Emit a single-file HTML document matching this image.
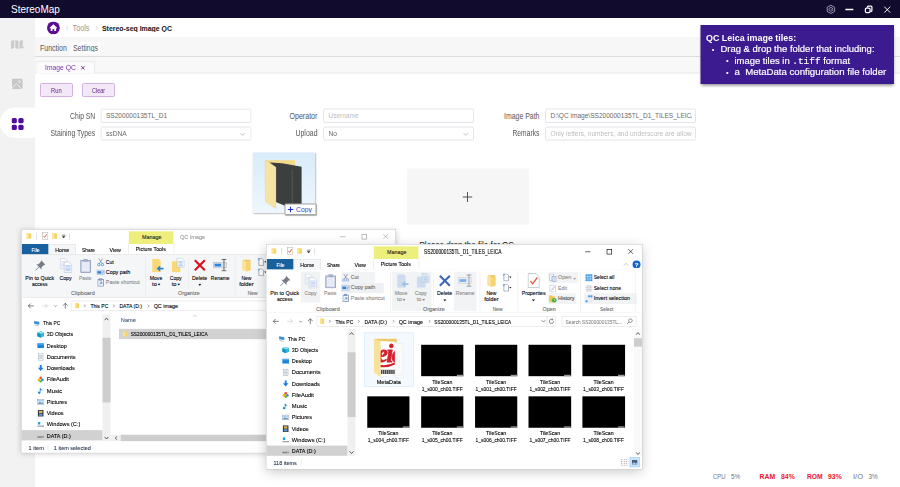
<!DOCTYPE html><html><head><meta charset="utf-8"><title>StereoMap</title><style>
*{box-sizing:border-box;margin:0;padding:0}
html,body{width:900px;height:487px;overflow:hidden;background:#fff}
body{position:relative;font-family:"Liberation Sans",sans-serif;color:#333}
.a{position:absolute}
.t{position:absolute;white-space:nowrap;line-height:1;transform-origin:0 50%}
#app{position:absolute;left:0;top:0;width:1800px;height:974px;transform:scale(.5);transform-origin:0 0;overflow:hidden}

#tb{left:0;top:0;width:1800px;height:36px;background:#110c2e}
#sb{left:0;top:36px;width:70px;height:938px;background:#f2f2f2}
#pill{left:0;top:215px;width:72px;height:61px;background:#fff;border-radius:30.5px 0 0 30.5px}
#crumb{left:70px;top:36px;width:1730px;height:38px;background:#fff}
#menu{left:70px;top:74px;width:1730px;height:40px;background:#f7f7f7;border-bottom:2px solid #dcdcdc}
#tabs{left:70px;top:114px;width:1730px;height:33px;background:#f8f8f8;border-bottom:2px solid #e9e9e9}
#tab{left:71px;top:122px;width:119px;height:25px;background:#fbfbfb;border:2px solid #ebebeb;border-bottom:none;border-radius:4px 4px 0 0}
#content{left:70px;top:160px;width:1730px;height:814px;background:#fff}
.btn{position:absolute;top:166px;height:27.6px;width:66px;background:#f3e8f8;border:2px solid #d2b1e2;border-radius:3px}
.inp{position:absolute;height:28.8px;border:2px solid #e4e4ea;border-radius:4px;background:#fff}
.chev{position:absolute;right:10px;top:8px;width:10.8px;height:10.8px}
#tip{left:1401px;top:50px;width:387px;height:118px;background:#3c1a90;box-shadow:0 3px 6px rgba(0,0,0,.45);color:#fff;font-size:18.4px}
#drag{left:506px;top:304.8px;width:124.4px;height:121.6px;background:linear-gradient(#d9ecfb,#edf6fd);box-shadow:1px 2px 3px rgba(0,0,0,.25);border-radius:2px}
#copy{left:569.4px;top:406.6px;width:63.4px;height:23px;background:#fff;border:2px solid #a6a6a6;box-shadow:1px 1px 2px rgba(0,0,0,.3);border-radius:2px}
#drop{left:814px;top:337.4px;width:244px;height:112px;background:#f6f6f6}

.win{position:absolute;width:800px;height:478px;transform:scale(0.46875);transform-origin:0 0;background:#fff;font-size:12px;color:#000;border:1px solid #8a8a8a;-webkit-text-stroke:0.22px}
.win .x{position:absolute;white-space:nowrap;line-height:1;transform-origin:0 50%}
.win .c{position:absolute;white-space:nowrap;line-height:1;transform:translateX(-50%);transform-origin:50% 50%;text-align:center}
.rib{position:absolute;left:0;top:53px;width:798px;height:92px;background:#f5f6f7;border-top:1px solid #dadbdc;border-bottom:1px solid #dadbdc}
.gl{color:#6d6d6d}
.vs{position:absolute;width:1px;background:#e2e3e4}
.sbv{position:absolute;width:17px;background:#f0f0f0}
.thumb{position:absolute;background:#cdcdcd}
.tile{position:absolute;width:90.4px;height:67.4px;background:#000}
.nav{position:absolute;left:0;top:181px;width:173px;height:271px;background:#fff}
</style></head><body>
<div id="app">
<div class="a" id="tb"></div>
<div class="t" id="t1" style="left:22.4px;top:8.6px;font-size:20.4px;color:#fff;transform:scaleX(0.9784);">StereoMap</div>
<svg class="a" style="left:1644px;top:0px;width:156px;height:36px" viewBox="0 0 78 18"><path d="M8.9 5.2 L12.6 7.3 V11.4 L8.9 13.5 L5.2 11.4 V7.3 Z" fill="none" stroke="#aaa6c2" stroke-width="0.9" stroke-linejoin="round"/><circle cx="8.9" cy="9.35" r="1.9" fill="none" stroke="#aaa6c2" stroke-width="0.8"/><circle cx="9.2" cy="9.35" r="0.55" fill="#aaa6c2"/><path d="M23.4 9.5 H31.3" stroke="#fff" stroke-width="1.5"/><path d="M45.3 7.6 V7 a1 1 0 0 1 1 -1 H48.9 a1 1 0 0 1 1 1 V10.4 a1 1 0 0 1 -1 1 H48.3" fill="none" stroke="#fff" stroke-width="1.25"/><rect x="43.4" y="8" width="4.6" height="4.5" rx="1.1" fill="#110c2e" stroke="#fff" stroke-width="1.25"/><path d="M62.3 6.7 L68.2 12.6 M68.2 6.7 L62.3 12.6" stroke="#fff" stroke-width="0.95"/></svg>
<div class="a" id="sb"></div><div class="a" id="pill"></div>
<svg class="a" style="left:21.8px;top:78.8px;width:28px;height:20px" viewBox="0 0 28 20"><path d="M0 3 L6.5 1 V17 L0 19Z M8.5 1 L15 3 V19 L8.5 17Z M17 3 L23.5 0.5 V16 L17 19Z" fill="#cbcbcb"/><path d="M24 14 L27 17 L24 17.5Z" fill="#cbcbcb"/></svg>
<svg class="a" style="left:24.4px;top:157.4px;width:21.2px;height:21px" viewBox="0 0 21 21"><rect x="0" y="0" width="21" height="21" rx="2.5" fill="#c6c6c6"/><path d="M0 19 L8.5 10.5 L19.5 21" fill="none" stroke="#f4f4f4" stroke-width="1.7"/><circle cx="14.8" cy="6.2" r="2.2" fill="none" stroke="#f4f4f4" stroke-width="1.5"/></svg>
<svg class="a" style="left:23.4px;top:236px;width:24.4px;height:24px" viewBox="0 0 24 24"><rect x="0" y="0" width="10.5" height="10.5" rx="3.2" fill="#520c9a"/><rect x="13.5" y="0" width="10.5" height="10.5" rx="3.2" fill="#520c9a"/><rect x="0" y="13.5" width="10.5" height="10.5" rx="3.2" fill="#520c9a"/><rect x="13.5" y="13.5" width="10.5" height="10.5" rx="3.2" fill="#520c9a"/></svg>
<div class="a" id="crumb"></div>
<svg class="a" style="left:94px;top:43.2px;width:25.6px;height:25.6px" viewBox="0 0 26 26"><circle cx="13" cy="13" r="13" fill="#5a0f92"/><path d="M13 5.5 L5.5 12.5 V13.5 H7.5 V19.5 H11.3 V15 H14.7 V19.5 H18.5 V13.5 H20.5 V12.5 Z" fill="#fff"/></svg>
<svg class="a" style="left:130.6px;top:51px;width:6.8px;height:10px" viewBox="0 0 7 10"><path d="M1.5 1 L5.5 5 L1.5 9" fill="none" stroke="#c2c2c2" stroke-width="1.3"/></svg>
<svg class="a" style="left:190px;top:51px;width:6.8px;height:10px" viewBox="0 0 7 10"><path d="M1.5 1 L5.5 5 L1.5 9" fill="none" stroke="#c2c2c2" stroke-width="1.3"/></svg>
<div class="t" id="t2" style="left:145.2px;top:47px;font-size:16.4px;color:#959595;transform:scaleX(0.8885);">Tools</div>
<div class="t" id="t3" style="left:204px;top:47.2px;font-size:16.2px;color:#111;font-weight:bold;transform:scaleX(0.8550);">Stereo-seq Image QC</div>
<div class="a" id="menu"></div>
<div class="a" style="left:143px;top:84px;width:57px;height:23px;background:#fff;border-radius:3px"></div>
<div class="t" id="t4" style="left:80px;top:87.4px;font-size:16.4px;color:#555;transform:scaleX(0.8525);">Function</div>
<div class="t" id="t5" style="left:146.4px;top:87.4px;font-size:16.4px;color:#555;transform:scaleX(0.8441);">Settings</div>
<div class="a" id="tabs"></div><div class="a" id="tab"></div><div class="a" id="content"></div>
<div class="t" id="t6" style="left:90px;top:127px;font-size:16px;color:#7a2fa6;transform:scaleX(0.8447);">Image QC</div>
<svg class="a" style="left:161.4px;top:130.6px;width:9.2px;height:9.2px" viewBox="0 0 8 8"><path d="M1 1 L7 7 M7 1 L1 7" stroke="#6a2a96" stroke-width="1.6"/></svg>
<div class="btn" style="left:79.6px"></div><div class="btn" style="left:164px"></div>
<div class="t" id="t7" style="left:102.4px;top:173.6px;font-size:13.2px;color:#5b1a86;transform:scaleX(0.8759);">Run</div>
<div class="t" id="t8" style="left:184px;top:173.6px;font-size:13.2px;color:#5b1a86;transform:scaleX(0.8250);">Clear</div>
<div class="t" id="t9" style="left:139.6px;top:223.2px;font-size:17.2px;color:#555;transform:scaleX(0.7875);">Chip SN</div><div class="inp" style="left:201px;top:217.4px;width:302px"></div><div class="a" style="left:203px;top:220.4px;width:292px;height:22px;overflow:hidden"><div class="t" id="t10" style="left:8.8px;top:4.8px;font-size:13.4px;color:#6a6a6a;transform:scaleX(0.9769);">SS200000135TL_D1</div></div>
<div class="t" id="t11" style="left:100.6px;top:258.4px;font-size:17.2px;color:#555;transform:scaleX(0.7951);">Staining Types</div><div class="inp" style="left:201px;top:252.6px;width:302px"><svg class="chev" viewBox="0 0 10 10"><path d="M1 3 L5 7 L9 3" fill="none" stroke="#b4b4b4" stroke-width="1.5"/></svg></div><div class="a" style="left:203px;top:255.6px;width:292px;height:22px;overflow:hidden"><div class="t" id="t12" style="left:8.8px;top:4.8px;font-size:13.4px;color:#6a6a6a;transform:scaleX(0.9983);">ssDNA</div></div>
<div class="t" id="t13" style="left:578.8px;top:223.2px;font-size:17.2px;color:#555;transform:scaleX(0.8227);">Operator</div><div class="inp" style="left:646.4px;top:217.4px;width:302px"></div><div class="a" style="left:648.4px;top:220.4px;width:292px;height:22px;overflow:hidden"><div class="t" id="t14" style="left:8.8px;top:4.8px;font-size:13.4px;color:#bdbdbd;transform:scaleX(0.9712);">Username</div></div>
<div class="t" id="t15" style="left:590.6px;top:258.4px;font-size:17.2px;color:#555;transform:scaleX(0.8078);">Upload</div><div class="inp" style="left:646.4px;top:252.6px;width:302px"><svg class="chev" viewBox="0 0 10 10"><path d="M1 3 L5 7 L9 3" fill="none" stroke="#b4b4b4" stroke-width="1.5"/></svg></div><div class="a" style="left:648.4px;top:255.6px;width:292px;height:22px;overflow:hidden"><div class="t" id="t16" style="left:8.8px;top:4.8px;font-size:13.4px;color:#6a6a6a;transform:scaleX(0.9927);">No</div></div>
<div class="t" id="t17" style="left:1008.4px;top:223.2px;font-size:17.2px;color:#555;transform:scaleX(0.8054);">Image Path</div><div class="inp" style="left:1090px;top:217.4px;width:302px"></div><div class="a" style="left:1092px;top:220.4px;width:292px;height:22px;overflow:hidden"><div class="t" id="t18" style="left:8.8px;top:4.8px;font-size:13.4px;color:#6a6a6a;transform:scaleX(0.9778);">D:\QC image\SS200000135TL_D1_TILES_LEICA</div></div>
<div class="t" id="t19" style="left:1025.4px;top:258.4px;font-size:17.2px;color:#555;transform:scaleX(0.7824);">Remarks</div><div class="inp" style="left:1090px;top:252.6px;width:302px"></div><div class="a" style="left:1092px;top:255.6px;width:292px;height:22px;overflow:hidden"><div class="t" id="t20" style="left:8.8px;top:4.8px;font-size:13.4px;color:#bdbdbd;transform:scaleX(0.9901);">Only letters, numbers, and underscore are allowed</div></div>
<div class="a" id="tip"></div>
<div class="t" id="t21" style="left:1412px;top:66.4px;font-size:19px;color:#fff;font-weight:bold;transform:scaleX(0.9376);">QC Leica image tiles:</div>
<div class="t" style="left:1423.6px;top:90.8px;font-size:15px;color:#fff;">•</div><div class="t" id="t22" style="left:1440.6px;top:88.4px;font-size:19px;color:#fff;transform:scaleX(0.9953);-webkit-text-stroke:0.36px #fff;">Drag &amp; drop the folder that including:</div>
<div class="t" style="left:1452px;top:113.2px;font-size:15px;color:#fff;">•</div><div class="t" id="t23" style="left:1468.6px;top:110.8px;font-size:19px;color:#fff;transform:scaleX(0.9944);-webkit-text-stroke:0.36px #fff;">image tiles in <span style="font-family:'Liberation Mono',monospace">.tiff</span> format</div>
<div class="t" style="left:1452px;top:135.6px;font-size:15px;color:#fff;">•</div><div class="t" id="t24" style="left:1468.6px;top:133.2px;font-size:19px;color:#fff;transform:scaleX(1.0115);-webkit-text-stroke:0.36px #fff;">a&nbsp; MetaData configuration file folder</div>
<div class="a" id="drag"></div>
<svg class="a" style="left:520px;top:312px;width:96px;height:112px" viewBox="260 156 48 56"><path d="M265.5 160.2 H295 V166 H265.5Z" fill="#f3d98a"/><path d="M269.6 162.6 L282 163.3 L301.6 166.8 V204.4 L289.3 207.6 L275.8 202 V167.2Z" fill="#3b3f3d"/><path d="M292.2 169.5 V206.6" stroke="#6d716f" stroke-width="0.5"/><path d="M265 160.4 L275.8 167.2 V208.4 L265.5 201.8Z" fill="#f7e3a3" stroke="#e6cf88" stroke-width="0.4"/></svg>
<div class="a" id="copy"></div>
<svg class="a" style="left:575.2px;top:412.8px;width:12px;height:12px" viewBox="0 0 6 6"><path d="M3 0V6M0 3H6" stroke="#1f2fc2" stroke-width="1.1"/></svg>
<div class="t" id="t25" style="left:592.4px;top:411.2px;font-size:14.8px;color:#3b49b5;transform:scaleX(0.9263);">Copy</div>
<div class="a" id="drop"></div>
<svg class="a" style="left:925.2px;top:384px;width:20px;height:20px" viewBox="0 0 10 10"><path d="M5 0V10M0 5H10" stroke="#444" stroke-width="0.9"/></svg>
<div class="t" id="t26" style="left:838.8px;top:479.8px;font-size:18px;color:#1a1a1a;transform:scaleX(0.8920);">Please drop the file for QC</div>
<div class="t" id="t27" style="left:1425.6px;top:945.2px;font-size:14.2px;color:#777;transform:scaleX(0.8342);">CPU</div>
<div class="t" id="t28" style="left:1462px;top:945.2px;font-size:14.2px;color:#777;transform:scaleX(0.9066);">5%</div>
<div class="t" id="t29" style="left:1519.4px;top:945.2px;font-size:14.2px;color:#f01428;font-weight:bold;transform:scaleX(0.9656);">RAM</div>
<div class="t" id="t30" style="left:1561.6px;top:945.2px;font-size:14.2px;color:#f01428;font-weight:bold;transform:scaleX(0.9716);">84%</div>
<div class="t" id="t31" style="left:1613.6px;top:945.2px;font-size:14.2px;color:#f01428;font-weight:bold;transform:scaleX(0.9423);">ROM</div>
<div class="t" id="t32" style="left:1655.8px;top:945.2px;font-size:14.2px;color:#f01428;font-weight:bold;transform:scaleX(0.9716);">93%</div>
<div class="t" id="t33" style="left:1706px;top:945.2px;font-size:14.2px;color:#777;transform:scaleX(1.0675);">I/O</div>
<div class="t" id="t34" style="left:1736.6px;top:945.2px;font-size:14.2px;color:#777;transform:scaleX(0.9066);">3%</div>
</div>
<div class="win" id="w1" style="left:21.4px;top:229px;width:800px;height:478px;z-index:2;box-shadow:0 2px 12px rgba(0,0,0,.22);border-color:rgba(120,120,120,.5)">
<svg class="a" style="left:10px;top:7px;width:12px;height:14px" viewBox="0 0 12 14"><path d="M1 1 H9 L11 3 V13 H1 Z" fill="#f6d568"/><path d="M1 1 H5 V13 H1 Z" fill="#fbe596"/></svg>
<div class="vs" style="left:31px;top:8px;height:14px;background:#bdbdbd"></div>
<svg class="a" style="left:44px;top:6px;width:13px;height:16px" viewBox="0 0 13 16"><rect x="0.5" y="0.5" width="12" height="15" fill="#fff" stroke="#8d8d8d"/><path d="M3 8 L5.5 11 L10 4" fill="none" stroke="#e0522d" stroke-width="1.8"/></svg>
<svg class="a" style="left:65px;top:7px;width:12px;height:14px" viewBox="0 0 12 14"><path d="M1 1 H9 L11 3 V13 H1 Z" fill="#f6d568"/><path d="M1 1 H5 V13 H1 Z" fill="#fbe596"/></svg>
<svg class="a" style="left:85px;top:10px;width:10px;height:10px" viewBox="0 0 10 10"><path d="M1 2H9" stroke="#222" stroke-width="1.3"/><path d="M1.5 4.5 H8.5 L5 8.5Z" fill="#222"/></svg>
<div class="vs" style="left:102px;top:8px;height:14px;background:#bdbdbd"></div>
<div class="a" style="left:229px;top:3.5px;width:95px;height:27px;background:#eeee7c"></div>
<div class="c" id="t35" style="left:277.5px;top:11.3px;color:#222;transform:translateX(-50%) scaleX(0.9522);">Manage</div>
<div class="x" id="t36" style="left:337.5px;top:8.6px;color:#999;transform:scaleX(0.9226);font-size:13px;">QC image</div>
<svg class="a" style="left:662px;top:0;width:138px;height:30px" viewBox="0 0 138 30"><path d="M18 15.5H29" stroke="#9a9a9a" stroke-width="1.3"/><rect x="64.5" y="10.5" width="10" height="10" fill="none" stroke="#9a9a9a" stroke-width="1.3"/><path d="M110 10 L120 20 M120 10 L110 20" stroke="#9a9a9a" stroke-width="1.3"/></svg>
<div class="a" style="left:1px;top:30.5px;width:57px;height:23px;background:#19609f"></div>
<div class="c" id="t37" style="left:29.5px;top:36.5px;color:#fff;transform:translateX(-50%) scaleX(0.9150);">File</div>
<div class="a" style="left:58px;top:30.5px;width:57.5px;height:23.5px;background:#f5f6f7;border:1px solid #dadbdc;border-bottom:none"></div>
<div class="c" id="t38" style="left:86.5px;top:36.5px;transform:translateX(-50%) scaleX(0.9339);">Home</div>
<div class="c" id="t39" style="left:143px;top:36.5px;transform:translateX(-50%) scaleX(0.8617);">Share</div>
<div class="c" id="t40" style="left:199.5px;top:36.5px;transform:translateX(-50%) scaleX(0.9420);">View</div>
<div class="vs" style="left:228px;top:30px;height:22px;background:#dadbdc"></div>
<div class="vs" style="left:325px;top:30px;height:22px;background:#dadbdc"></div>
<div class="c" id="t41" style="left:276px;top:35.5px;transform:translateX(-50%) scaleX(0.9345);">Picture Tools</div>
<div class="rib" style="width:798px;height:92px;background:#f5f6f7;"></div>
<div class="a" style="left:0;top:0px;width:798px;height:10px">
<svg class="a" style="left:27px;top:64px;width:26px;height:26px" viewBox="0 0 28 28"><path d="M16 2 L26 12 L22 13 L17 18 L17 23 L5 11 L10 11 L15 6 Z" fill="#767c85"/><path d="M11 17 L3 25" stroke="#767c85" stroke-width="2"/></svg>
<div class="c" id="t42" style="left:39px;top:97.3px;color:#000;transform:translateX(-50%) scaleX(0.9489);">Pin to Quick</div><div class="c" id="t43" style="left:39px;top:109.8px;color:#000;transform:translateX(-50%) scaleX(0.8833);">access</div>
<svg class="a" style="left:80.5px;top:61px;width:28px;height:32px;opacity:1" viewBox="0 0 30 34"><path d="M2 1 H12 L17 6 V24 H2 Z" fill="#fff" stroke="#aab4c4"/><path d="M4.5 8H14.5M4.5 11H14.5M4.5 14H14.5M4.5 17H14.5M4.5 20H14.5" stroke="#c5d8f6" stroke-width="1.7"/><path d="M11 9 H22 L28 15 V33 H11 Z" fill="#fdfdfe" stroke="#a3afc2"/><path d="M13.5 17H25.5M13.5 20H25.5M13.5 23H25.5M13.5 26H25.5M13.5 29H25.5" stroke="#a9c6f5" stroke-width="1.9"/></svg>
<div class="c" id="t44" style="left:94px;top:97.3px;color:#000;transform:translateX(-50%) scaleX(0.9138);">Copy</div>
<svg class="a" style="left:125px;top:62px;width:24px;height:31px" viewBox="0 0 26 34"><rect x="1.5" y="4.5" width="23" height="28" fill="#c9d1e6" stroke="#7f8fb5" stroke-width="1.6"/><rect x="4.5" y="8.5" width="17" height="21" fill="#eceef8"/><path d="M7 13H19M7 17H19M7 21H19M7 25H19" stroke="#dcdff0" stroke-width="1"/><rect x="9" y="1.5" width="8" height="5" fill="#aeb9cc" stroke="#7f8fb5"/></svg>
<div class="c" id="t45" style="left:136px;top:97.3px;color:#8b8b8b;transform:translateX(-50%) scaleX(0.8538);">Paste</div>
<svg class="a" style="left:161px;top:61px;width:16px;height:18px" viewBox="0 0 16 18"><path d="M4 1 L11 12 M12 1 L5 12" stroke="#7a8594" stroke-width="1.5"/><circle cx="4" cy="14" r="2.6" fill="none" stroke="#2b8de0" stroke-width="1.6"/><circle cx="12" cy="14" r="2.6" fill="none" stroke="#2b8de0" stroke-width="1.6"/></svg>
<div class="x" id="t46" style="left:180px;top:62.5px;color:#000;transform:scaleX(0.8990);">Cut</div>
<svg class="a" style="left:160px;top:85px;width:18px;height:13px" viewBox="0 0 18 13"><rect x="0.5" y="1.5" width="17" height="10" fill="#cfe0f6" stroke="#9db5d6"/><rect x="2" y="4" width="8" height="5" fill="#2f7fd6"/><path d="M12 9 L15 4" stroke="#5f6f86" stroke-width="1.2"/></svg>
<div class="x" id="t47" style="left:180px;top:85.2px;color:#000;transform:scaleX(0.9469);">Copy path</div>
<svg class="a" style="left:162px;top:104px;width:14px;height:18px" viewBox="0 0 14 18"><rect x="1" y="3" width="12" height="14" fill="#eef2f9" stroke="#5e79ad" stroke-width="1.4"/><rect x="4.5" y="0.8" width="5" height="3.4" fill="#9fb0cc" stroke="#5e79ad"/><path d="M5 13 L9 9 M6 8.6 H9.4 V12" fill="none" stroke="#2a62c4" stroke-width="1.3"/></svg>
<div class="x" id="t48" style="left:180px;top:107px;color:#8b8b8b;transform:scaleX(0.9424);">Paste shortcut</div>
<div class="c" id="t49" style="left:131px;top:129.8px;color:#6d6d6d;transform:translateX(-50%) scaleX(0.9849);">Clipboard</div>
<div class="vs" style="left:264px;top:58px;height:84px"></div>
<svg class="a" style="left:277px;top:62px;width:30px;height:30px;opacity:1" viewBox="0 0 30 30"><path d="M2 1 H16 L20 5 V29 H2 Z" fill="#f8d877"/><path d="M26 19.5 H19 V15 L11 21.5 L19 28 V23.5 H26 Z" fill="#2a86e0"/></svg>
<div class="c" id="t50" style="left:287px;top:97.3px;color:#000;transform:translateX(-50%) scaleX(0.9201);">Move</div><div class="c" style="left:287px;top:109.8px;color:#000;">to&nbsp;&nbsp;</div>
<svg class="a" style="left:320px;top:60px;width:30px;height:32px;opacity:1" viewBox="0 0 30 32"><path d="M1 8 H15 L19 12 V31 H1 Z" fill="#f8d877"/><path d="M12 1 H22 L27 6 V20 H12 Z" fill="#fdfdfe" stroke="#9fb2cc"/><path d="M15 8H24M15 11H24M15 14H24M15 17H24" stroke="#8fb4ea" stroke-width="1.4"/></svg>
<div class="c" id="t51" style="left:329px;top:97.3px;color:#000;transform:translateX(-50%) scaleX(0.9138);">Copy</div><div class="c" style="left:329px;top:109.8px;color:#000;">to&nbsp;&nbsp;</div>
<svg class="a" style="left:290px;top:115px;width:7px;height:5px" viewBox="0 0 7 5"><path d="M0 0 H7 L3.5 4.5Z" fill="#000"/></svg>
<svg class="a" style="left:332px;top:115px;width:7px;height:5px" viewBox="0 0 7 5"><path d="M0 0 H7 L3.5 4.5Z" fill="#000"/></svg>
<div class="vs" style="left:356px;top:60px;height:62px"></div>
<svg class="a" style="left:366.5px;top:63px;width:27px;height:27px" viewBox="0 0 24 24"><path d="M2.5 2.5 L21.5 21.5 M21.5 2.5 L2.5 21.5" stroke="#d8101c" stroke-width="4"/></svg>
<div class="c" id="t52" style="left:380px;top:97.3px;color:#000;transform:translateX(-50%) scaleX(0.9456);">Delete</div>
<svg class="a" style="left:376.5px;top:116px;width:7px;height:5px" viewBox="0 0 7 5"><path d="M0 0 H7 L3.5 4.5Z" fill="#222"/></svg>
<svg class="a" style="left:408px;top:62px;width:34px;height:28px;opacity:1" viewBox="0 0 34 28"><rect x="1" y="8" width="28" height="12" fill="#e4e8ee" stroke="#a3acb8"/><rect x="4" y="11" width="14" height="6" fill="#2a86e0"/><path d="M19 2 H29 M24 2 V26 M19 26 H29" stroke="#3c3c3c" stroke-width="1.6" fill="none"/></svg>
<div class="c" id="t53" style="left:424px;top:97.3px;color:#000;transform:translateX(-50%) scaleX(0.8796);">Rename</div>
<div class="c" id="t54" style="left:357px;top:129.8px;color:#6d6d6d;transform:translateX(-50%) scaleX(0.9466);">Organize</div>
<div class="vs" style="left:455px;top:58px;height:84px"></div>
<svg class="a" style="left:469.5px;top:61px;width:20px;height:32px" viewBox="0 0 24 32"><path d="M3 1 H22 V28 H3 Z" fill="#eec55a"/><path d="M1 2 L12 5 V31 L1 27 Z" fill="#fbe39a"/><path d="M12 5 H22 V28 L12 31Z" fill="#f6d56e"/></svg>
<div class="c" id="t55" style="left:480px;top:97.3px;color:#000;transform:translateX(-50%) scaleX(0.8869);">New</div><div class="c" id="t56" style="left:480px;top:109.8px;color:#000;transform:translateX(-50%) scaleX(1.0223);">folder</div>
<svg class="a" style="left:503px;top:61px;width:20px;height:16.5px" viewBox="0 0 24 20"><path d="M4 1 H12 L16 5 V19 H4 Z" fill="#fdfdfe" stroke="#5d6b7c" stroke-width="1.3"/><path d="M1 3 L7 3 M4 0 L4 6" stroke="#4a90d9" stroke-width="1.4"/><path d="M18 8 H24 L21 12Z" fill="#222"/></svg>
<svg class="a" style="left:503px;top:83px;width:20px;height:16.5px" viewBox="0 0 24 20"><path d="M4 1 H12 L16 5 V19 H4 Z" fill="#fdfdfe" stroke="#5d6b7c" stroke-width="1.3"/><path d="M1 3 L7 3 M4 0 L4 6" stroke="#4a90d9" stroke-width="1.4"/><path d="M18 8 H24 L21 12Z" fill="#222"/></svg>
<div class="c" id="t57" style="left:493px;top:129.8px;color:#6d6d6d;transform:translateX(-50%) scaleX(0.8744);">New</div>
<div class="vs" style="left:536px;top:58px;height:84px"></div>
<svg class="a" style="left:557px;top:60px;width:26px;height:32px" viewBox="0 0 26 32"><path d="M1 1 H18 L25 8 V31 H1 Z" fill="#fdfdfe" stroke="#9aa3ad" stroke-width="1.2"/><path d="M6 17 L11 23 L21 9" fill="none" stroke="#e0522d" stroke-width="2.6"/></svg>
<div class="c" id="t58" style="left:569.5px;top:97.3px;color:#000;transform:translateX(-50%) scaleX(0.9360);">Properties</div>
<svg class="a" style="left:566px;top:116px;width:7px;height:5px" viewBox="0 0 7 5"><path d="M0 0 H7 L3.5 4.5Z" fill="#222"/></svg>
<svg class="a" style="left:603px;top:61px;width:16px;height:18px" viewBox="0 0 16 18"><rect x="1" y="1" width="9" height="14" fill="#f4f6fa" stroke="#9aa6b8"/><rect x="6" y="6" width="9" height="11" fill="#cfdcf2" stroke="#7f95bd"/></svg>
<div class="x" id="t59" style="left:622px;top:63.2px;color:#8b8b8b;transform:scaleX(0.9605);">Open</div>
<svg class="a" style="left:654px;top:70px;width:7px;height:5px" viewBox="0 0 7 5"><path d="M0 0 H7 L3.5 4.5Z" fill="#9a9a9a"/></svg>
<svg class="a" style="left:603px;top:84px;width:16px;height:18px" viewBox="0 0 16 18"><rect x="1.5" y="1.5" width="12" height="15" fill="#f7f8fa" stroke="#b3bac6"/><path d="M5 13 L12 5" stroke="#a9b6cc" stroke-width="2"/></svg>
<div class="x" id="t60" style="left:622px;top:85.6px;color:#8b8b8b;transform:scaleX(0.9184);">Edit</div>
<svg class="a" style="left:602px;top:105px;width:18px;height:19px" viewBox="0 0 18 19"><path d="M1 3 H7 L9 5 H14 V17 H1 Z" fill="#f2c84b"/><circle cx="12" cy="13" r="5" fill="#3fae49"/><path d="M12 10 V13 H14.5" stroke="#fff" stroke-width="1.3" fill="none"/></svg>
<div class="x" id="t61" style="left:622px;top:106.8px;color:#000;transform:scaleX(0.9265);">History</div>
<div class="c" id="t62" style="left:603px;top:129.8px;color:#6d6d6d;transform:translateX(-50%) scaleX(0.9707);">Open</div>
<div class="vs" style="left:670px;top:58px;height:84px"></div>
<svg class="a" style="left:680px;top:62px;width:16px;height:16px" viewBox="0 0 16 16"><rect x="0.5" y="0.5" width="15" height="15" fill="#3a96e8"/><path d="M0 5.5H16M0 10.5H16M5.5 0V16M10.5 0V16" stroke="#d4ebff" stroke-width="1.2"/></svg>
<div class="x" id="t63" style="left:698px;top:63.2px;transform:scaleX(0.9075);">Select all</div>
<svg class="a" style="left:680px;top:85px;width:16px;height:16px" viewBox="0 0 16 16"><rect x="0.5" y="0.5" width="15" height="15" fill="#eceef1"/><path d="M0 5.5H16M0 10.5H16M5.5 0V16M10.5 0V16" stroke="#c4c9d1" stroke-width="1.2"/></svg>
<div class="x" id="t64" style="left:698px;top:85.6px;transform:scaleX(0.9228);">Select none</div>
<svg class="a" style="left:680px;top:107px;width:16px;height:16px" viewBox="0 0 16 16"><rect x="0.5" y="0.5" width="15" height="15" fill="#e6eaf0"/><rect x="6" y="0.5" width="9.5" height="5" fill="#3a96e8"/><rect x="0.5" y="10.5" width="5" height="5" fill="#3a96e8"/><path d="M0 5.5H16M0 10.5H16M5.5 0V16M10.5 0V16" stroke="#f2f6fb" stroke-width="1.2"/></svg>
<div class="x" id="t65" style="left:698px;top:106.8px;transform:scaleX(0.9589);">Invert selection</div>
<div class="c" id="t66" style="left:726px;top:129.8px;color:#6d6d6d;transform:translateX(-50%) scaleX(0.8543);">Select</div>
<div class="vs" style="left:786px;top:58px;height:84px"></div>
<svg class="a" style="left:8px;top:152px;width:100px;height:22px" viewBox="0 0 100 22"><path d="M18 11 H6.5 M11.5 6 L6.5 11 L11.5 16" fill="none" stroke="#3f3f3f" stroke-width="1.4"/><path d="M36 11 H47.5 M42.5 6 L47.5 11 L42.5 16" fill="none" stroke="#cdcdcd" stroke-width="1.4"/><path d="M62 10 L64.7 12.7 L67.4 10" fill="none" stroke="#666" stroke-width="1.4"/><path d="M85.5 17 V5.5 M80.5 10.5 L85.5 5.5 L90.5 10.5" fill="none" stroke="#3f3f3f" stroke-width="1.4"/></svg>
<div class="a" style="left:107px;top:152px;width:492px;height:22px;border:1px solid #d9d9d9;background:#fff"></div>
<svg class="a" style="left:113px;top:156px;width:11px;height:13px" viewBox="0 0 12 14"><path d="M1 1 H9 L11 3 V13 H1 Z" fill="#f6d568"/><path d="M1 1 H5 V13 H1 Z" fill="#fbe596"/></svg>
<svg class="a" style="left:132px;top:159px;width:6px;height:8px" viewBox="0 0 6 8"><path d="M1.5 1 L4.5 4 L1.5 7" fill="none" stroke="#555" stroke-width="1.2"/></svg>
<div class="x" id="t67" style="left:146.8px;top:157.5px;transform:scaleX(0.8949);">This PC</div>
<svg class="a" style="left:194px;top:159px;width:6px;height:8px" viewBox="0 0 6 8"><path d="M1.5 1 L4.5 4 L1.5 7" fill="none" stroke="#555" stroke-width="1.2"/></svg>
<div class="x" id="t68" style="left:208.6px;top:157.5px;transform:scaleX(0.9075);">DATA (D:)</div>
<svg class="a" style="left:268px;top:159px;width:6px;height:8px" viewBox="0 0 6 8"><path d="M1.5 1 L4.5 4 L1.5 7" fill="none" stroke="#555" stroke-width="1.2"/></svg>
<div class="x" id="t69" style="left:282.2px;top:157.5px;transform:scaleX(0.9587);">QC image</div>
</div>
<div class="a" style="left:0;top:0px;width:798px;height:476px">
<div class="a" style="left:0;top:427.7px;width:173px;height:22.5px;background:#d1d1d1"></div>
<svg class="a" style="left:25px;top:191.7px;width:16px;height:16px" viewBox="0 0 16 16"><path d="M2 3 L13 5 V11 L2 9 Z" fill="#3b8fd4"/><path d="M3 12 L12 13.5" stroke="#9aa7b3" stroke-width="1.5"/></svg>
<div class="x" id="t70" style="left:46.3px;top:193.7px;transform:scaleX(0.8644);">This PC</div>
<svg class="a" style="left:33px;top:215.7px;width:16px;height:16px" viewBox="0 0 16 16"><path d="M8 1 L15 4 V12 L8 15 L1 12 V4 Z" fill="#33b7dc"/><path d="M8 1 L15 4 L8 7 L1 4 Z" fill="#8fe0f2"/><path d="M8 7 V15 L1 12 V4 Z" fill="#1590c2"/></svg>
<div class="x" id="t71" style="left:54px;top:217.7px;transform:scaleX(0.9485);">3D Objects</div>
<svg class="a" style="left:33px;top:239.7px;width:16px;height:16px" viewBox="0 0 16 16"><rect x="1" y="3" width="14" height="10" fill="#1a83e0"/><rect x="1" y="3" width="14" height="3" fill="#56a8ef"/></svg>
<div class="x" id="t72" style="left:54px;top:241.7px;transform:scaleX(0.9698);">Desktop</div>
<svg class="a" style="left:33px;top:263.7px;width:16px;height:16px" viewBox="0 0 16 16"><rect x="3" y="1" width="10" height="14" fill="#f4f4f4" stroke="#9aa4b0" stroke-width="1"/><path d="M5 5H11M5 8H11M5 11H11" stroke="#7f9cc0" stroke-width="1"/></svg>
<div class="x" id="t73" style="left:54px;top:265.7px;transform:scaleX(1.0131);">Documents</div>
<svg class="a" style="left:33px;top:287.7px;width:16px;height:16px" viewBox="0 0 16 16"><path d="M6 1 H10 V7 H14 L8 14 L2 7 H6 Z" fill="#1b7fe0"/></svg>
<div class="x" id="t74" style="left:54px;top:289.7px;transform:scaleX(1.0105);">Downloads</div>
<svg class="a" style="left:33px;top:311.7px;width:16px;height:16px" viewBox="0 0 16 16"><circle cx="8" cy="4.5" r="3" fill="#f2542d"/><circle cx="4.5" cy="9" r="3" fill="#f7b500"/><circle cx="11.5" cy="9" r="3" fill="#3a8ee6"/><circle cx="8" cy="12" r="2.6" fill="#66b32e"/></svg>
<div class="x" id="t75" style="left:54px;top:313.7px;transform:scaleX(1.0131);">FileAudit</div>
<svg class="a" style="left:33px;top:335.7px;width:16px;height:16px" viewBox="0 0 16 16"><path d="M6 2 L7.5 2 C8 5 12 5 12 9 C11 7 9 7 7.5 7 V12 A2.8 2.5 0 1 1 6 10 Z" fill="#1c86e8"/></svg>
<div class="x" id="t76" style="left:54px;top:337.7px;transform:scaleX(1.0401);">Music</div>
<svg class="a" style="left:33px;top:359.7px;width:16px;height:16px" viewBox="0 0 16 16"><rect x="1" y="3" width="14" height="10" fill="#eef2f6" stroke="#8c98a6" stroke-width="1"/><path d="M2 12 L6 7 L9 10 L11 8 L14 12 Z" fill="#5e8cc0"/><rect x="2" y="4" width="12" height="3" fill="#9fd0f5"/></svg>
<div class="x" id="t77" style="left:54px;top:361.7px;transform:scaleX(0.9940);">Pictures</div>
<svg class="a" style="left:33px;top:383.7px;width:16px;height:16px" viewBox="0 0 16 16"><rect x="2" y="1" width="12" height="14" fill="#3a3f4a"/><rect x="4.5" y="3" width="7" height="4.5" fill="#e7b64a"/><rect x="4.5" y="9" width="7" height="4.5" fill="#5c9bd6"/></svg>
<div class="x" id="t78" style="left:54px;top:385.7px;transform:scaleX(0.9812);">Videos</div>
<svg class="a" style="left:33px;top:407.7px;width:16px;height:16px" viewBox="0 0 16 16"><path d="M1 10 H15 V13 H1 Z" fill="#9aa3ad"/><path d="M2 3 L7 2.3 V8 H2 Z" fill="#1fa0e6"/><rect x="11" y="11" width="3" height="1" fill="#42d94c"/></svg>
<div class="x" id="t79" style="left:54px;top:409.7px;transform:scaleX(0.9928);">Windows (C:)</div>
<svg class="a" style="left:33px;top:431.7px;width:16px;height:16px" viewBox="0 0 16 16"><path d="M1 9 H15 V12.5 H1 Z" fill="#7d868f"/><rect x="11" y="10.5" width="3" height="1" fill="#dfe5ea"/></svg>
<div class="x" id="t80" style="left:54px;top:433.7px;transform:scaleX(0.9643);">DATA (D:)</div>
<div class="sbv" style="left:173px;top:181px;height:271px"></div>
<div class="thumb" style="left:173px;top:231px;width:17px;height:138px"></div>
<svg class="a" style="left:176px;top:187px;width:11px;height:8px" viewBox="0 0 11 8"><path d="M1.5 6.5 L5.5 2 L9.5 6.5" fill="none" stroke="#505050" stroke-width="2"/></svg>
<svg class="a" style="left:176px;top:441px;width:11px;height:8px" viewBox="0 0 11 8"><path d="M1.5 1.5 L5.5 6 L9.5 1.5" fill="none" stroke="#505050" stroke-width="2"/></svg>
<div class="x" style="left:212px;top:188px;color:#4c607a;">Name</div>
<svg class="a" style="left:365px;top:181px;width:9px;height:6px" viewBox="0 0 9 6"><path d="M1 5 L4.5 1.5 L8 5" fill="none" stroke="#9a9a9a" stroke-width="1.1"/></svg>
<div class="a" style="left:208px;top:212px;width:590px;height:22px;background:#d2d2d2"></div>
<svg class="a" style="left:216px;top:216px;width:11px;height:14px" viewBox="0 0 12 14"><path d="M1 1 H9 L11 3 V13 H1 Z" fill="#f6d568"/><path d="M1 1 H5 V13 H1 Z" fill="#fbe596"/></svg>
<div class="x" id="t81" style="left:233px;top:217.5px;transform:scaleX(0.8492);">SS200000135TL_D1_TILES_LEICA</div>
<div class="a" style="left:190px;top:438px;width:608px;height:14px;background:#f0f0f0"></div>
<div class="thumb" style="left:212px;top:438px;width:586px;height:14px"></div>
<svg class="a" style="left:198px;top:440px;width:8px;height:10px" viewBox="0 0 8 10"><path d="M6 1.5 L2 5 L6 8.5" fill="none" stroke="#505050" stroke-width="1.8"/></svg>
<div class="a" style="left:0;top:452px;width:798px;height:24px;background:#fff"></div>
<div class="x" id="t82" style="left:15px;top:459.5px;color:#2a3950;transform:scaleX(1.0065);">1 item</div><div class="vs" style="left:56px;top:457px;height:16px"></div><div class="x" id="t83" style="left:69px;top:459.5px;color:#2a3950;transform:scaleX(0.9775);">1 item selected</div>
</div></div>
<div class="win" id="w2" style="left:265.8px;top:244.1px;width:803px;height:480.5px;z-index:3;box-shadow:0 6px 24px rgba(0,0,0,.21);border-color:rgba(110,110,110,.45)">
<svg class="a" style="left:10px;top:7px;width:12px;height:14px" viewBox="0 0 12 14"><path d="M1 1 H9 L11 3 V13 H1 Z" fill="#f6d568"/><path d="M1 1 H5 V13 H1 Z" fill="#fbe596"/></svg>
<div class="vs" style="left:31px;top:8px;height:14px;background:#bdbdbd"></div>
<svg class="a" style="left:44px;top:6px;width:13px;height:16px" viewBox="0 0 13 16"><rect x="0.5" y="0.5" width="12" height="15" fill="#fff" stroke="#8d8d8d"/><path d="M3 8 L5.5 11 L10 4" fill="none" stroke="#e0522d" stroke-width="1.8"/></svg>
<svg class="a" style="left:65px;top:7px;width:12px;height:14px" viewBox="0 0 12 14"><path d="M1 1 H9 L11 3 V13 H1 Z" fill="#f6d568"/><path d="M1 1 H5 V13 H1 Z" fill="#fbe596"/></svg>
<svg class="a" style="left:85px;top:10px;width:10px;height:10px" viewBox="0 0 10 10"><path d="M1 2H9" stroke="#222" stroke-width="1.3"/><path d="M1.5 4.5 H8.5 L5 8.5Z" fill="#222"/></svg>
<div class="vs" style="left:102px;top:8px;height:14px;background:#bdbdbd"></div>
<div class="a" style="left:229px;top:3.5px;width:95px;height:27px;background:#eeee7c"></div>
<div class="c" id="t84" style="left:277.5px;top:11.3px;color:#222;transform:translateX(-50%) scaleX(0.9522);">Manage</div>
<div class="x" id="t85" style="left:336px;top:8.5px;color:#000;transform:scaleX(0.7323);font-size:14px;">SS200000135TL_D1_TILES_LEICA</div>
<svg class="a" style="left:662px;top:0;width:138px;height:30px" viewBox="0 0 138 30"><path d="M18 15.5H29" stroke="#000" stroke-width="1.3"/><rect x="64.5" y="10.5" width="10" height="10" fill="none" stroke="#000" stroke-width="1.3"/><path d="M110 10 L120 20 M120 10 L110 20" stroke="#000" stroke-width="1.3"/></svg>
<div class="a" style="left:1px;top:30.5px;width:57px;height:23px;background:#19609f"></div>
<div class="c" id="t86" style="left:29.5px;top:36.5px;color:#fff;transform:translateX(-50%) scaleX(0.9150);">File</div>
<div class="a" style="left:58px;top:30.5px;width:57.5px;height:23.5px;background:#f5f6f7;border:1px solid #dadbdc;border-bottom:none"></div>
<div class="c" id="t87" style="left:86.5px;top:36.5px;transform:translateX(-50%) scaleX(0.9339);">Home</div>
<div class="c" id="t88" style="left:143px;top:36.5px;transform:translateX(-50%) scaleX(0.8617);">Share</div>
<div class="c" id="t89" style="left:199.5px;top:36.5px;transform:translateX(-50%) scaleX(0.9420);">View</div>
<div class="vs" style="left:228px;top:30px;height:22px;background:#dadbdc"></div>
<div class="vs" style="left:325px;top:30px;height:22px;background:#dadbdc"></div>
<div class="c" id="t90" style="left:276px;top:35.5px;transform:translateX(-50%) scaleX(0.9345);">Picture Tools</div>
<svg class="a" style="left:760px;top:37px;width:14px;height:10px" viewBox="0 0 14 10"><path d="M2 8 L7 3 L12 8" fill="none" stroke="#b5b5b5" stroke-width="1.4"/></svg>
<div class="a" style="left:781px;top:34px;width:17px;height:17px;border-radius:50%;background:#1565c8"></div>
<div class="c" style="left:789.5px;top:36px;color:#fff;font-weight:bold;font-size:13px;">?</div>
<div class="rib" style="width:801px;height:93.1px;background:#fff;border-bottom-color:#f0f0f0;border-top-color:#f3f3f3"></div>
<div class="a" style="left:0;top:1.1px;width:801px;height:10px">
<svg class="a" style="left:27px;top:64px;width:26px;height:26px" viewBox="0 0 28 28"><path d="M16 2 L26 12 L22 13 L17 18 L17 23 L5 11 L10 11 L15 6 Z" fill="#767c85"/><path d="M11 17 L3 25" stroke="#767c85" stroke-width="2"/></svg>
<div class="c" id="t91" style="left:39px;top:97.3px;color:#000;transform:translateX(-50%) scaleX(0.9489);">Pin to Quick</div><div class="c" id="t92" style="left:39px;top:109.8px;color:#000;transform:translateX(-50%) scaleX(0.8833);">access</div>
<div class="a" style="left:73px;top:57px;width:42px;height:66px;background:#f1f3f5"></div>
<svg class="a" style="left:80.5px;top:61px;width:28px;height:32px;opacity:.8" viewBox="0 0 30 34"><path d="M2 1 H12 L17 6 V24 H2 Z" fill="#fff" stroke="#aab4c4"/><path d="M4.5 8H14.5M4.5 11H14.5M4.5 14H14.5M4.5 17H14.5M4.5 20H14.5" stroke="#c5d8f6" stroke-width="1.7"/><path d="M11 9 H22 L28 15 V33 H11 Z" fill="#fdfdfe" stroke="#a3afc2"/><path d="M13.5 17H25.5M13.5 20H25.5M13.5 23H25.5M13.5 26H25.5M13.5 29H25.5" stroke="#a9c6f5" stroke-width="1.9"/></svg>
<div class="c" id="t93" style="left:94px;top:97.3px;color:#8b8b8b;transform:translateX(-50%) scaleX(0.9138);">Copy</div>
<svg class="a" style="left:125px;top:62px;width:24px;height:31px" viewBox="0 0 26 34"><rect x="1.5" y="4.5" width="23" height="28" fill="#c9d1e6" stroke="#7f8fb5" stroke-width="1.6"/><rect x="4.5" y="8.5" width="17" height="21" fill="#eceef8"/><path d="M7 13H19M7 17H19M7 21H19M7 25H19" stroke="#dcdff0" stroke-width="1"/><rect x="9" y="1.5" width="8" height="5" fill="#aeb9cc" stroke="#7f8fb5"/></svg>
<div class="c" id="t94" style="left:136px;top:97.3px;color:#8b8b8b;transform:translateX(-50%) scaleX(0.8538);">Paste</div>
<div class="a" style="left:160px;top:58px;width:72px;height:23px;background:#f1f3f5"></div><div class="a" style="left:160px;top:81px;width:90px;height:22px;background:#eef0f3"></div>
<svg class="a" style="left:161px;top:61px;width:16px;height:18px" viewBox="0 0 16 18"><path d="M4 1 L11 12 M12 1 L5 12" stroke="#7a8594" stroke-width="1.5"/><circle cx="4" cy="14" r="2.6" fill="none" stroke="#7f9fd0" stroke-width="1.6"/><circle cx="12" cy="14" r="2.6" fill="none" stroke="#7f9fd0" stroke-width="1.6"/></svg>
<div class="x" id="t95" style="left:180px;top:62.5px;color:#6c6c6c;transform:scaleX(0.8990);">Cut</div>
<svg class="a" style="left:160px;top:85px;width:18px;height:13px" viewBox="0 0 18 13"><rect x="0.5" y="1.5" width="17" height="10" fill="#cfe0f6" stroke="#9db5d6"/><rect x="2" y="4" width="8" height="5" fill="#2f7fd6"/><path d="M12 9 L15 4" stroke="#5f6f86" stroke-width="1.2"/></svg>
<div class="x" id="t96" style="left:180px;top:85.2px;color:#6c6c6c;transform:scaleX(0.9469);">Copy path</div>
<svg class="a" style="left:162px;top:104px;width:14px;height:18px" viewBox="0 0 14 18"><rect x="1" y="3" width="12" height="14" fill="#eef2f9" stroke="#5e79ad" stroke-width="1.4"/><rect x="4.5" y="0.8" width="5" height="3.4" fill="#9fb0cc" stroke="#5e79ad"/><path d="M5 13 L9 9 M6 8.6 H9.4 V12" fill="none" stroke="#2a62c4" stroke-width="1.3"/></svg>
<div class="x" id="t97" style="left:180px;top:107px;color:#8b8b8b;transform:scaleX(0.9424);">Paste shortcut</div>
<div class="c" id="t98" style="left:131px;top:129.8px;color:#6d6d6d;transform:translateX(-50%) scaleX(0.9849);">Clipboard</div>
<div class="vs" style="left:264px;top:58px;height:84px"></div>
<div class="a" style="left:268px;top:57px;width:84px;height:84px;background:#f1f3f5"></div>
<svg class="a" style="left:277px;top:62px;width:30px;height:30px;opacity:.8" viewBox="0 0 30 30"><path d="M2 1 H16 L20 5 V29 H2 Z" fill="#c3d6ee"/><path d="M26 19.5 H19 V15 L11 21.5 L19 28 V23.5 H26 Z" fill="#8fb3e3"/></svg>
<div class="c" id="t99" style="left:287px;top:97.3px;color:#8b8b8b;transform:translateX(-50%) scaleX(0.9201);">Move</div><div class="c" style="left:287px;top:109.8px;color:#8b8b8b;">to&nbsp;&nbsp;</div>
<svg class="a" style="left:320px;top:60px;width:30px;height:32px;opacity:.8" viewBox="0 0 30 32"><path d="M1 8 H15 L19 12 V31 H1 Z" fill="#c3d6ee"/><path d="M12 1 H22 L27 6 V20 H12 Z" fill="#dbe7f6" stroke="#9fb2cc"/><path d="M15 8H24M15 11H24M15 14H24M15 17H24" stroke="#8fb4ea" stroke-width="1.4"/></svg>
<div class="c" id="t100" style="left:329px;top:97.3px;color:#8b8b8b;transform:translateX(-50%) scaleX(0.9138);">Copy</div><div class="c" style="left:329px;top:109.8px;color:#8b8b8b;">to&nbsp;&nbsp;</div>
<svg class="a" style="left:290px;top:115px;width:7px;height:5px" viewBox="0 0 7 5"><path d="M0 0 H7 L3.5 4.5Z" fill="#8b8b8b"/></svg>
<svg class="a" style="left:332px;top:115px;width:7px;height:5px" viewBox="0 0 7 5"><path d="M0 0 H7 L3.5 4.5Z" fill="#8b8b8b"/></svg>
<div class="vs" style="left:356px;top:60px;height:62px"></div>
<svg class="a" style="left:366.5px;top:63px;width:27px;height:27px" viewBox="0 0 24 24"><path d="M2.5 2.5 L21.5 21.5 M21.5 2.5 L2.5 21.5" stroke="#3b69b8" stroke-width="4"/></svg>
<div class="c" id="t101" style="left:380px;top:97.3px;color:#000;transform:translateX(-50%) scaleX(0.9456);">Delete</div>
<svg class="a" style="left:376.5px;top:116px;width:7px;height:5px" viewBox="0 0 7 5"><path d="M0 0 H7 L3.5 4.5Z" fill="#222"/></svg>
<div class="a" style="left:400px;top:57px;width:48px;height:84px;background:#f1f3f5"></div>
<svg class="a" style="left:408px;top:62px;width:34px;height:28px;opacity:0.6" viewBox="0 0 34 28"><rect x="1" y="8" width="28" height="12" fill="#e4e8ee" stroke="#a3acb8"/><rect x="4" y="11" width="14" height="6" fill="#2a86e0"/><path d="M19 2 H29 M24 2 V26 M19 26 H29" stroke="#3c3c3c" stroke-width="1.6" fill="none"/></svg>
<div class="c" id="t102" style="left:424px;top:97.3px;color:#8b8b8b;transform:translateX(-50%) scaleX(0.8796);">Rename</div>
<div class="c" id="t103" style="left:357px;top:129.8px;color:#6d6d6d;transform:translateX(-50%) scaleX(0.9466);">Organize</div>
<div class="vs" style="left:455px;top:58px;height:84px"></div>
<svg class="a" style="left:469.5px;top:61px;width:20px;height:32px" viewBox="0 0 24 32"><path d="M3 1 H22 V28 H3 Z" fill="#eec55a"/><path d="M1 2 L12 5 V31 L1 27 Z" fill="#fbe39a"/><path d="M12 5 H22 V28 L12 31Z" fill="#f6d56e"/></svg>
<div class="c" id="t104" style="left:480px;top:97.3px;color:#000;transform:translateX(-50%) scaleX(0.8869);">New</div><div class="c" id="t105" style="left:480px;top:109.8px;color:#000;transform:translateX(-50%) scaleX(1.0223);">folder</div>
<svg class="a" style="left:503px;top:61px;width:20px;height:16.5px" viewBox="0 0 24 20"><path d="M4 1 H12 L16 5 V19 H4 Z" fill="#fdfdfe" stroke="#5d6b7c" stroke-width="1.3"/><path d="M1 3 L7 3 M4 0 L4 6" stroke="#4a90d9" stroke-width="1.4"/><path d="M18 8 H24 L21 12Z" fill="#222"/></svg>
<svg class="a" style="left:503px;top:83px;width:20px;height:16.5px" viewBox="0 0 24 20"><path d="M4 1 H12 L16 5 V19 H4 Z" fill="#fdfdfe" stroke="#5d6b7c" stroke-width="1.3"/><path d="M1 3 L7 3 M4 0 L4 6" stroke="#4a90d9" stroke-width="1.4"/><path d="M18 8 H24 L21 12Z" fill="#222"/></svg>
<div class="c" id="t106" style="left:493px;top:129.8px;color:#6d6d6d;transform:translateX(-50%) scaleX(0.8744);">New</div>
<div class="vs" style="left:536px;top:58px;height:84px"></div>
<svg class="a" style="left:557px;top:60px;width:26px;height:32px" viewBox="0 0 26 32"><path d="M1 1 H18 L25 8 V31 H1 Z" fill="#fdfdfe" stroke="#9aa3ad" stroke-width="1.2"/><path d="M6 17 L11 23 L21 9" fill="none" stroke="#e0522d" stroke-width="2.6"/></svg>
<div class="c" id="t107" style="left:569.5px;top:97.3px;color:#000;transform:translateX(-50%) scaleX(0.9360);">Properties</div>
<svg class="a" style="left:566px;top:116px;width:7px;height:5px" viewBox="0 0 7 5"><path d="M0 0 H7 L3.5 4.5Z" fill="#222"/></svg>
<div class="a" style="left:601px;top:58px;width:64px;height:23px;background:#f1f3f5"></div><div class="a" style="left:601px;top:103px;width:60px;height:23px;background:#f1f3f5"></div>
<svg class="a" style="left:603px;top:61px;width:16px;height:18px" viewBox="0 0 16 18"><rect x="1" y="1" width="9" height="14" fill="#f4f6fa" stroke="#9aa6b8"/><rect x="6" y="6" width="9" height="11" fill="#cfdcf2" stroke="#7f95bd"/></svg>
<div class="x" id="t108" style="left:622px;top:63.2px;color:#8b8b8b;transform:scaleX(0.9605);">Open</div>
<svg class="a" style="left:654px;top:70px;width:7px;height:5px" viewBox="0 0 7 5"><path d="M0 0 H7 L3.5 4.5Z" fill="#9a9a9a"/></svg>
<svg class="a" style="left:603px;top:84px;width:16px;height:18px" viewBox="0 0 16 18"><rect x="1.5" y="1.5" width="12" height="15" fill="#f7f8fa" stroke="#b3bac6"/><path d="M5 13 L12 5" stroke="#a9b6cc" stroke-width="2"/></svg>
<div class="x" id="t109" style="left:622px;top:85.6px;color:#8b8b8b;transform:scaleX(0.9184);">Edit</div>
<svg class="a" style="left:602px;top:105px;width:18px;height:19px" viewBox="0 0 18 19"><path d="M1 3 H7 L9 5 H14 V17 H1 Z" fill="#f2c84b"/><circle cx="12" cy="13" r="5" fill="#3fae49"/><path d="M12 10 V13 H14.5" stroke="#fff" stroke-width="1.3" fill="none"/></svg>
<div class="x" id="t110" style="left:622px;top:106.8px;color:#444;transform:scaleX(0.9265);">History</div>
<div class="c" id="t111" style="left:603px;top:129.8px;color:#6d6d6d;transform:translateX(-50%) scaleX(0.9707);">Open</div>
<div class="vs" style="left:670px;top:58px;height:84px"></div>
<div class="a" style="left:678px;top:103px;width:112px;height:23px;background:#f1f3f5"></div>
<svg class="a" style="left:680px;top:62px;width:16px;height:16px" viewBox="0 0 16 16"><rect x="0.5" y="0.5" width="15" height="15" fill="#3a96e8"/><path d="M0 5.5H16M0 10.5H16M5.5 0V16M10.5 0V16" stroke="#d4ebff" stroke-width="1.2"/></svg>
<div class="x" id="t112" style="left:698px;top:63.2px;transform:scaleX(0.9075);">Select all</div>
<svg class="a" style="left:680px;top:85px;width:16px;height:16px" viewBox="0 0 16 16"><rect x="0.5" y="0.5" width="15" height="15" fill="#eceef1"/><path d="M0 5.5H16M0 10.5H16M5.5 0V16M10.5 0V16" stroke="#c4c9d1" stroke-width="1.2"/></svg>
<div class="x" id="t113" style="left:698px;top:85.6px;transform:scaleX(0.9228);">Select none</div>
<svg class="a" style="left:680px;top:107px;width:16px;height:16px" viewBox="0 0 16 16"><rect x="0.5" y="0.5" width="15" height="15" fill="#e6eaf0"/><rect x="6" y="0.5" width="9.5" height="5" fill="#3a96e8"/><rect x="0.5" y="10.5" width="5" height="5" fill="#3a96e8"/><path d="M0 5.5H16M0 10.5H16M5.5 0V16M10.5 0V16" stroke="#f2f6fb" stroke-width="1.2"/></svg>
<div class="x" id="t114" style="left:698px;top:106.8px;transform:scaleX(0.9589);">Invert selection</div>
<div class="c" id="t115" style="left:726px;top:129.8px;color:#6d6d6d;transform:translateX(-50%) scaleX(0.8543);">Select</div>
<div class="vs" style="left:786px;top:58px;height:84px"></div>
<svg class="a" style="left:8px;top:152px;width:100px;height:22px" viewBox="0 0 100 22"><path d="M18 11 H6.5 M11.5 6 L6.5 11 L11.5 16" fill="none" stroke="#3f3f3f" stroke-width="1.4"/><path d="M36 11 H47.5 M42.5 6 L47.5 11 L42.5 16" fill="none" stroke="#cdcdcd" stroke-width="1.4"/><path d="M62 10 L64.7 12.7 L67.4 10" fill="none" stroke="#666" stroke-width="1.4"/><path d="M85.5 17 V5.5 M80.5 10.5 L85.5 5.5 L90.5 10.5" fill="none" stroke="#3f3f3f" stroke-width="1.4"/></svg>
<div class="a" style="left:107px;top:152px;width:492px;height:22px;border:1px solid #d9d9d9;background:#fff"></div>
<div class="a" style="left:598px;top:152px;width:19px;height:22px;border:1px solid #d9d9d9;background:#fff"></div>
<svg class="a" style="left:586px;top:159px;width:10px;height:8px" viewBox="0 0 10 8"><path d="M1 1.5 L5 5.5 L9 1.5" fill="none" stroke="#444" stroke-width="1.4"/></svg>
<svg class="a" style="left:601px;top:156px;width:14px;height:14px" viewBox="0 0 14 14"><path d="M11.5 7 A4.5 4.5 0 1 1 9 3" fill="none" stroke="#444" stroke-width="1.3"/><path d="M7.5 0.5 L10.5 3 L7.5 5.2" fill="none" stroke="#444" stroke-width="1.2"/></svg>
<div class="a" style="left:630px;top:152px;width:159px;height:22px;border:1px solid #d9d9d9;background:#fff"></div>
<div class="x" id="t116" style="left:638px;top:157.5px;color:#8c8c8c;transform:scaleX(0.8520);">Search SS200000135TL...</div>
<svg class="a" style="left:768px;top:156px;width:14px;height:14px" viewBox="0 0 14 14"><circle cx="8.5" cy="5.5" r="3.8" fill="none" stroke="#555" stroke-width="1.3"/><path d="M5.8 8.2 L1.5 12.5" stroke="#555" stroke-width="1.6"/></svg>
<svg class="a" style="left:113px;top:156px;width:11px;height:13px" viewBox="0 0 12 14"><path d="M1 1 H9 L11 3 V13 H1 Z" fill="#f6d568"/><path d="M1 1 H5 V13 H1 Z" fill="#fbe596"/></svg>
<svg class="a" style="left:132px;top:159px;width:6px;height:8px" viewBox="0 0 6 8"><path d="M1.5 1 L4.5 4 L1.5 7" fill="none" stroke="#555" stroke-width="1.2"/></svg>
<div class="x" id="t117" style="left:146.8px;top:157.5px;transform:scaleX(0.8949);">This PC</div>
<svg class="a" style="left:194px;top:159px;width:6px;height:8px" viewBox="0 0 6 8"><path d="M1.5 1 L4.5 4 L1.5 7" fill="none" stroke="#555" stroke-width="1.2"/></svg>
<div class="x" id="t118" style="left:208.6px;top:157.5px;transform:scaleX(0.9075);">DATA (D:)</div>
<svg class="a" style="left:268px;top:159px;width:6px;height:8px" viewBox="0 0 6 8"><path d="M1.5 1 L4.5 4 L1.5 7" fill="none" stroke="#555" stroke-width="1.2"/></svg>
<div class="x" id="t119" style="left:282.2px;top:157.5px;transform:scaleX(0.9587);">QC image</div>
<svg class="a" style="left:345px;top:159px;width:6px;height:8px" viewBox="0 0 6 8"><path d="M1.5 1 L4.5 4 L1.5 7" fill="none" stroke="#555" stroke-width="1.2"/></svg>
<div class="x" id="t120" style="left:357.5px;top:157.5px;transform:scaleX(0.8492);">SS200000135TL_D1_TILES_LEICA</div>
</div>
<div class="a" style="left:0;top:-1.3px;width:801px;height:479.8px">
<div class="a" style="left:0;top:430px;width:173px;height:22.5px;background:#d1d1d1"></div>
<svg class="a" style="left:25px;top:194px;width:16px;height:16px" viewBox="0 0 16 16"><path d="M2 3 L13 5 V11 L2 9 Z" fill="#3b8fd4"/><path d="M3 12 L12 13.5" stroke="#9aa7b3" stroke-width="1.5"/></svg>
<div class="x" id="t121" style="left:46.3px;top:196px;transform:scaleX(0.8644);">This PC</div>
<svg class="a" style="left:33px;top:218px;width:16px;height:16px" viewBox="0 0 16 16"><path d="M8 1 L15 4 V12 L8 15 L1 12 V4 Z" fill="#33b7dc"/><path d="M8 1 L15 4 L8 7 L1 4 Z" fill="#8fe0f2"/><path d="M8 7 V15 L1 12 V4 Z" fill="#1590c2"/></svg>
<div class="x" id="t122" style="left:54px;top:220px;transform:scaleX(0.9485);">3D Objects</div>
<svg class="a" style="left:33px;top:242px;width:16px;height:16px" viewBox="0 0 16 16"><rect x="1" y="3" width="14" height="10" fill="#1a83e0"/><rect x="1" y="3" width="14" height="3" fill="#56a8ef"/></svg>
<div class="x" id="t123" style="left:54px;top:244px;transform:scaleX(0.9698);">Desktop</div>
<svg class="a" style="left:33px;top:266px;width:16px;height:16px" viewBox="0 0 16 16"><rect x="3" y="1" width="10" height="14" fill="#f4f4f4" stroke="#9aa4b0" stroke-width="1"/><path d="M5 5H11M5 8H11M5 11H11" stroke="#7f9cc0" stroke-width="1"/></svg>
<div class="x" id="t124" style="left:54px;top:268px;transform:scaleX(1.0131);">Documents</div>
<svg class="a" style="left:33px;top:290px;width:16px;height:16px" viewBox="0 0 16 16"><path d="M6 1 H10 V7 H14 L8 14 L2 7 H6 Z" fill="#1b7fe0"/></svg>
<div class="x" id="t125" style="left:54px;top:292px;transform:scaleX(1.0105);">Downloads</div>
<svg class="a" style="left:33px;top:314px;width:16px;height:16px" viewBox="0 0 16 16"><circle cx="8" cy="4.5" r="3" fill="#f2542d"/><circle cx="4.5" cy="9" r="3" fill="#f7b500"/><circle cx="11.5" cy="9" r="3" fill="#3a8ee6"/><circle cx="8" cy="12" r="2.6" fill="#66b32e"/></svg>
<div class="x" id="t126" style="left:54px;top:316px;transform:scaleX(1.0131);">FileAudit</div>
<svg class="a" style="left:33px;top:338px;width:16px;height:16px" viewBox="0 0 16 16"><path d="M6 2 L7.5 2 C8 5 12 5 12 9 C11 7 9 7 7.5 7 V12 A2.8 2.5 0 1 1 6 10 Z" fill="#1c86e8"/></svg>
<div class="x" id="t127" style="left:54px;top:340px;transform:scaleX(1.0401);">Music</div>
<svg class="a" style="left:33px;top:362px;width:16px;height:16px" viewBox="0 0 16 16"><rect x="1" y="3" width="14" height="10" fill="#eef2f6" stroke="#8c98a6" stroke-width="1"/><path d="M2 12 L6 7 L9 10 L11 8 L14 12 Z" fill="#5e8cc0"/><rect x="2" y="4" width="12" height="3" fill="#9fd0f5"/></svg>
<div class="x" id="t128" style="left:54px;top:364px;transform:scaleX(0.9940);">Pictures</div>
<svg class="a" style="left:33px;top:386px;width:16px;height:16px" viewBox="0 0 16 16"><rect x="2" y="1" width="12" height="14" fill="#3a3f4a"/><rect x="4.5" y="3" width="7" height="4.5" fill="#e7b64a"/><rect x="4.5" y="9" width="7" height="4.5" fill="#5c9bd6"/></svg>
<div class="x" id="t129" style="left:54px;top:388px;transform:scaleX(0.9812);">Videos</div>
<svg class="a" style="left:33px;top:410px;width:16px;height:16px" viewBox="0 0 16 16"><path d="M1 10 H15 V13 H1 Z" fill="#9aa3ad"/><path d="M2 3 L7 2.3 V8 H2 Z" fill="#1fa0e6"/><rect x="11" y="11" width="3" height="1" fill="#42d94c"/></svg>
<div class="x" id="t130" style="left:54px;top:412px;transform:scaleX(0.9928);">Windows (C:)</div>
<svg class="a" style="left:33px;top:434px;width:16px;height:16px" viewBox="0 0 16 16"><path d="M1 9 H15 V12.5 H1 Z" fill="#7d868f"/><rect x="11" y="10.5" width="3" height="1" fill="#dfe5ea"/></svg>
<div class="x" id="t131" style="left:54px;top:436px;transform:scaleX(0.9643);">DATA (D:)</div>
<div class="sbv" style="left:173px;top:181px;height:271px"></div>
<div class="thumb" style="left:173px;top:231px;width:17px;height:138px"></div>
<svg class="a" style="left:176px;top:187px;width:11px;height:8px" viewBox="0 0 11 8"><path d="M1.5 6.5 L5.5 2 L9.5 6.5" fill="none" stroke="#505050" stroke-width="2"/></svg>
<svg class="a" style="left:176px;top:441px;width:11px;height:8px" viewBox="0 0 11 8"><path d="M1.5 1.5 L5.5 6 L9.5 1.5" fill="none" stroke="#505050" stroke-width="2"/></svg>
<div class="sbv" style="left:784px;top:181px;height:271px;width:17px;background:#fafafa"></div>
<div class="thumb" style="left:784px;top:201px;width:17px;height:18px"></div>
<svg class="a" style="left:787px;top:187px;width:11px;height:8px" viewBox="0 0 11 8"><path d="M1.5 6.5 L5.5 2 L9.5 6.5" fill="none" stroke="#505050" stroke-width="2"/></svg>
<svg class="a" style="left:787px;top:443px;width:11px;height:8px" viewBox="0 0 11 8"><path d="M1.5 1.5 L5.5 6 L9.5 1.5" fill="none" stroke="#505050" stroke-width="2"/></svg>
<div class="a" style="left:207.5px;top:189px;width:106px;height:115px;background:#f3f9fe;border:1.5px solid #c6e2fa"></div>
<svg class="a" style="left:228.5px;top:201.5px;width:64px;height:85px" viewBox="0 0 64 83" preserveAspectRatio="none"><path d="M0 1 H49 V14 H0Z" fill="#efc75e"/><path d="M43 8.5 L62.5 11.5 V75 L43 79Z" fill="#fafafa" stroke="#e2e2e2" stroke-width=".7"/><path d="M47 22 V66" stroke="#f1ecd2" stroke-width=".8"/><clipPath id="pg1"><path d="M11.5 5.5 L45 7.5 V76.5 L14 81.5Z"/></clipPath><path d="M11.5 5.5 L45 7.5 V76.5 L14 81.5Z" fill="#fff" stroke="#dcdcdc" stroke-width=".6"/><g clip-path="url(#pg1)"><text x="7" y="49" font-family="Liberation Serif,serif" font-style="italic" font-weight="bold" font-size="52" fill="#d41f2c" letter-spacing="-3" stroke="#d41f2c" stroke-width="1.6">eica</text><path d="M12 57.5 Q30 61 46 52" stroke="#d41f2c" stroke-width="4.5" fill="none"/><path d="M15 70 H45" stroke="#4a4a4a" stroke-width="9" stroke-dasharray="3.4 1"/></g><path d="M0 1 L14.6 7 V81.5 L0 71.5Z" fill="#f8e29b"/></svg>
<div class="c" id="t132" style="left:260.5px;top:289px;transform:translateX(-50%) scaleX(0.9917);">MetaData</div>
<div class="tile" style="left:329.8px;top:215.3px"></div>
<div class="a" style="left:405.8px;top:279.3px;width:14px;height:3px;background:#9a9a9a"></div>
<div class="c" id="t133" style="left:375.0px;top:289px;transform:translateX(-50%) scaleX(0.9276);">TileScan</div>
<div class="c" id="t134" style="left:375.0px;top:304px;transform:translateX(-50%) scaleX(0.8706);">1_s000_ch00.TIFF</div>
<div class="tile" style="left:444.6px;top:215.3px"></div>
<div class="a" style="left:520.6px;top:279.3px;width:14px;height:3px;background:#9a9a9a"></div>
<div class="c" id="t135" style="left:489.8px;top:289px;transform:translateX(-50%) scaleX(0.9276);">TileScan</div>
<div class="c" id="t136" style="left:489.8px;top:304px;transform:translateX(-50%) scaleX(0.8706);">1_s001_ch00.TIFF</div>
<div class="tile" style="left:559.4px;top:215.3px"></div>
<div class="a" style="left:635.4px;top:279.3px;width:14px;height:3px;background:#9a9a9a"></div>
<div class="c" id="t137" style="left:604.6px;top:289px;transform:translateX(-50%) scaleX(0.9276);">TileScan</div>
<div class="c" id="t138" style="left:604.6px;top:304px;transform:translateX(-50%) scaleX(0.8706);">1_s002_ch00.TIFF</div>
<div class="tile" style="left:674.2px;top:215.3px"></div>
<div class="a" style="left:750.2px;top:279.3px;width:14px;height:3px;background:#9a9a9a"></div>
<div class="c" id="t139" style="left:719.4000000000001px;top:289px;transform:translateX(-50%) scaleX(0.9276);">TileScan</div>
<div class="c" id="t140" style="left:719.4000000000001px;top:304px;transform:translateX(-50%) scaleX(0.8706);">1_s003_ch00.TIFF</div>
<div class="tile" style="left:215.0px;top:325.3px"></div>
<div class="a" style="left:291.0px;top:389.3px;width:14px;height:3px;background:#9a9a9a"></div>
<div class="c" id="t141" style="left:260.2px;top:398px;transform:translateX(-50%) scaleX(0.9276);">TileScan</div>
<div class="c" id="t142" style="left:260.2px;top:413px;transform:translateX(-50%) scaleX(0.8706);">1_s004_ch00.TIFF</div>
<div class="tile" style="left:329.8px;top:325.3px"></div>
<div class="a" style="left:405.8px;top:389.3px;width:14px;height:3px;background:#9a9a9a"></div>
<div class="c" id="t143" style="left:375.0px;top:398px;transform:translateX(-50%) scaleX(0.9276);">TileScan</div>
<div class="c" id="t144" style="left:375.0px;top:413px;transform:translateX(-50%) scaleX(0.8706);">1_s005_ch00.TIFF</div>
<div class="tile" style="left:444.6px;top:325.3px"></div>
<div class="a" style="left:520.6px;top:389.3px;width:14px;height:3px;background:#9a9a9a"></div>
<div class="c" id="t145" style="left:489.8px;top:398px;transform:translateX(-50%) scaleX(0.9276);">TileScan</div>
<div class="c" id="t146" style="left:489.8px;top:413px;transform:translateX(-50%) scaleX(0.8706);">1_s006_ch00.TIFF</div>
<div class="tile" style="left:559.4px;top:325.3px"></div>
<div class="a" style="left:635.4px;top:389.3px;width:14px;height:3px;background:#9a9a9a"></div>
<div class="c" id="t147" style="left:604.6px;top:398px;transform:translateX(-50%) scaleX(0.9276);">TileScan</div>
<div class="c" id="t148" style="left:604.6px;top:413px;transform:translateX(-50%) scaleX(0.8706);">1_s007_ch00.TIFF</div>
<div class="tile" style="left:674.2px;top:325.3px"></div>
<div class="a" style="left:750.2px;top:389.3px;width:14px;height:3px;background:#9a9a9a"></div>
<div class="c" id="t149" style="left:719.4000000000001px;top:398px;transform:translateX(-50%) scaleX(0.9276);">TileScan</div>
<div class="c" id="t150" style="left:719.4000000000001px;top:413px;transform:translateX(-50%) scaleX(0.8706);">1_s008_ch00.TIFF</div>
<div class="a" style="left:0;top:452px;width:801px;height:28px;background:#fff"></div>
<div class="x" id="t151" style="left:15px;top:462.5px;color:#2a3950;transform:scaleX(0.9679);">118 items</div><div class="vs" style="left:74px;top:458px;height:16px"></div>
<svg class="a" style="left:755px;top:458px;width:18px;height:16px" viewBox="0 0 18 16"><path d="M1 2H4M1 6H4M1 10H4M1 14H4" stroke="#c98f8f" stroke-width="1.6"/><path d="M7 2H17M7 6H17M7 10H17M7 14H17" stroke="#8a8a8a" stroke-width="1.2" stroke-dasharray="3 1.5"/></svg>
<div class="a" style="left:775px;top:455px;width:21px;height:21px;background:#cce8ff;border:1px solid #7fc0f5"></div>
<svg class="a" style="left:779px;top:460px;width:13px;height:11px" viewBox="0 0 13 11"><rect x="0.5" y="0.5" width="12" height="10" fill="#4b5f7d"/><path d="M1 9 L5 5 L8 8 L10 6 L12 8 V10 H1Z" fill="#9fc3e8"/></svg>
</div></div>
</body></html>
